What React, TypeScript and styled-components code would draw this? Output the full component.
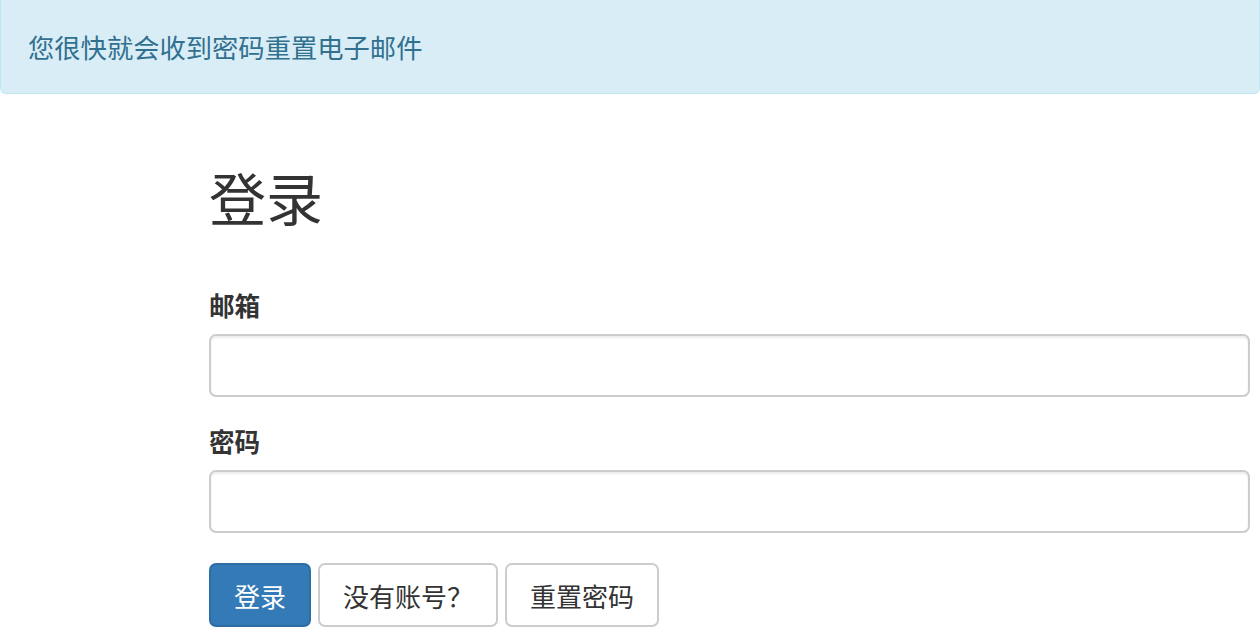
import React from "react";
import styled, { createGlobalStyle } from "styled-components";

const Global = createGlobalStyle`
  html, body {
    margin: 0;
    padding: 0;
    background: #fff;
  }
  body {
    font-family: "Liberation Sans", "Noto Sans CJK SC", sans-serif;
    color: #333;
    font-size: 25.6px;
    line-height: 1.43;
  }
  * { box-sizing: border-box; }
`;

const Alert = styled.div`
  background: #d9edf7;
  border: 1px solid #bce8f1;
  border-top: none;
  border-radius: 0 0 6px 6px;
  color: #31708f;
  font-size: 26.3px;
  line-height: 40px;
  padding: 29px 27px 24px 27px;
`;

const Main = styled.div`
  padding: 0 10px 0 209px;
`;

const Title = styled.h2`
  margin: 77px 0 58px 0;
  font-size: 57px;
  line-height: 60px;
  font-weight: 400;
  color: #333;
`;

const Group = styled.div`
  margin-bottom: 28px;
`;

const Label = styled.label`
  display: block;
  font-weight: 700;
  font-size: 25.6px;
  line-height: 36px;
  margin-bottom: 9px;
  color: #333;
`;

const Input = styled.input`
  display: block;
  width: 100%;
  height: 63px;
  border: 2px solid #ccc;
  border-radius: 7px;
  box-shadow: inset 0 2px 2px rgba(0, 0, 0, 0.075);
  padding: 11px 22px;
  font-size: 25.6px;
  outline: none;
`;

const Actions = styled.div`
  display: flex;
  gap: 7px;
  margin-top: 30px;
`;

const Button = styled.button<{ $primary?: boolean }>`
  height: 64px;
  padding: 0 23px;
  font-family: "Liberation Sans", "Noto Sans CJK SC", sans-serif;
  font-size: 26px;
  border-radius: 7px;
  border: 2px solid ${(p) => (p.$primary ? "#2e6da4" : "#ccc")};
  background: ${(p) => (p.$primary ? "#337ab7" : "#fff")};
  color: ${(p) => (p.$primary ? "#fff" : "#333")};
  cursor: pointer;
`;

export default function App() {
  return (
    <>
      <Global />
      <Alert>您很快就会收到密码重置电子邮件</Alert>
      <Main>
        <Title>登录</Title>
        <Group>
          <Label>邮箱</Label>
          <Input type="email" />
        </Group>
        <Group>
          <Label>密码</Label>
          <Input type="password" />
        </Group>
        <Actions>
          <Button $primary>登录</Button>
          <Button>没有账号？</Button>
          <Button>重置密码</Button>
        </Actions>
      </Main>
    </>
  );
}
